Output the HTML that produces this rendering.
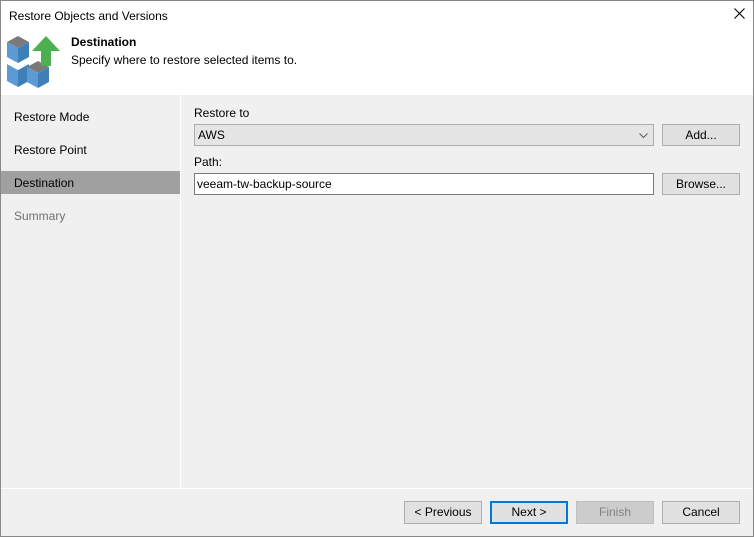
<!DOCTYPE html><html><head><style>
body{margin:0;width:754px;height:537px;overflow:hidden;background:#f0f0f0;font-family:"Liberation Sans",sans-serif;font-size:12px;color:#000;position:relative}
.a{position:absolute}
.btn{position:absolute;background:#e1e1e1;border:1px solid #adadad;box-sizing:border-box;text-align:center;line-height:20px;font-size:12px}
</style></head><body>
<div class="a" style="left:0;top:0;width:754px;height:537px;box-sizing:border-box;border:1px solid #888;z-index:5;pointer-events:none"></div>
<div class="a" style="left:0;top:0;width:754px;height:95px;background:#fff"></div>
<div class="a" style="left:9px;top:9px">Restore Objects and Versions</div>
<svg class="a" style="left:734px;top:8px" width="11" height="11" viewBox="0 0 11 11"><path d="M0.5 0.5L10.5 10.5M10.5 0.5L0.5 10.5" stroke="#000" stroke-width="1.1"/></svg>
<svg class="a" style="left:0;top:30px" width="70" height="62" viewBox="0 30 70 62">
<polygon points="7,42 18,36 29,42 18,48" fill="#7a7a7a"/>
<polygon points="7,42 18,48 18,63 7,57" fill="#5b9bd5"/>
<polygon points="18,48 29,42 29,57 18,63" fill="#3f7fb8"/>
<polygon points="7,64 18,70 18,87 7,81" fill="#5b9bd5"/>
<polygon points="18,70 29,64 29,81 18,87" fill="#3f7fb8"/>
<polygon points="7,59 18,65 18,70 7,64" fill="#fff"/>
<polygon points="18,65 29,59 29,64 18,70" fill="#fff"/>
<polygon points="27,67 38,61 49,67 38,73" fill="#7a7a7a"/>
<polygon points="27,67 38,73 38,88 27,82" fill="#5b9bd5"/>
<polygon points="38,73 49,67 49,82 38,88" fill="#3f7fb8"/>
<polygon points="46,36 60,51 51,51 51,66 41,66 41,51 32,51" fill="#4caf50"/>
</svg>
<div class="a" style="left:71px;top:35px;font-weight:bold">Destination</div>
<div class="a" style="left:71px;top:53px">Specify where to restore selected items to.</div>
<div class="a" style="left:180px;top:95px;width:1px;height:393px;background:#fff"></div>
<div class="a" style="left:14px;top:110px">Restore Mode</div>
<div class="a" style="left:14px;top:143px">Restore Point</div>
<div class="a" style="left:1px;top:171px;width:179px;height:23px;background:#a0a0a0"></div>
<div class="a" style="left:14px;top:176px">Destination</div>
<div class="a" style="left:14px;top:209px;color:#707070">Summary</div>
<div class="a" style="left:194px;top:106px">Restore to</div>
<div class="a" style="left:194px;top:124px;width:460px;height:22px;box-sizing:border-box;border:1px solid #adadad;background:#e5e5e5;padding-left:3px;line-height:20px">AWS<svg style="position:absolute;right:5px;top:8px" width="9" height="5" viewBox="0 0 9 5"><path d="M0.5 0.5L4.5 4.5L8.5 0.5" stroke="#555" fill="none"/></svg></div>
<div class="btn" style="left:662px;top:124px;width:78px;height:22px">Add...</div>
<div class="a" style="left:194px;top:155px">Path:</div>
<div class="a" style="left:194px;top:173px;width:460px;height:22px;box-sizing:border-box;border:1px solid #7a7a7a;background:#fff;padding-left:2px;line-height:20px">veeam-tw-backup-source</div>
<div class="btn" style="left:662px;top:173px;width:78px;height:22px">Browse...</div>
<div class="a" style="left:0;top:488px;width:754px;height:1px;background:#fff"></div>
<div class="btn" style="left:404px;top:501px;width:78px;height:23px">&lt; Previous</div>
<div class="btn" style="left:490px;top:501px;width:78px;height:23px;border:2px solid #0078d7;line-height:19px">Next &gt;</div>
<div class="btn" style="left:576px;top:501px;width:78px;height:23px;background:#ccc;border-color:#bfbfbf;color:#838383">Finish</div>
<div class="btn" style="left:662px;top:501px;width:78px;height:23px">Cancel</div>
</body></html>
